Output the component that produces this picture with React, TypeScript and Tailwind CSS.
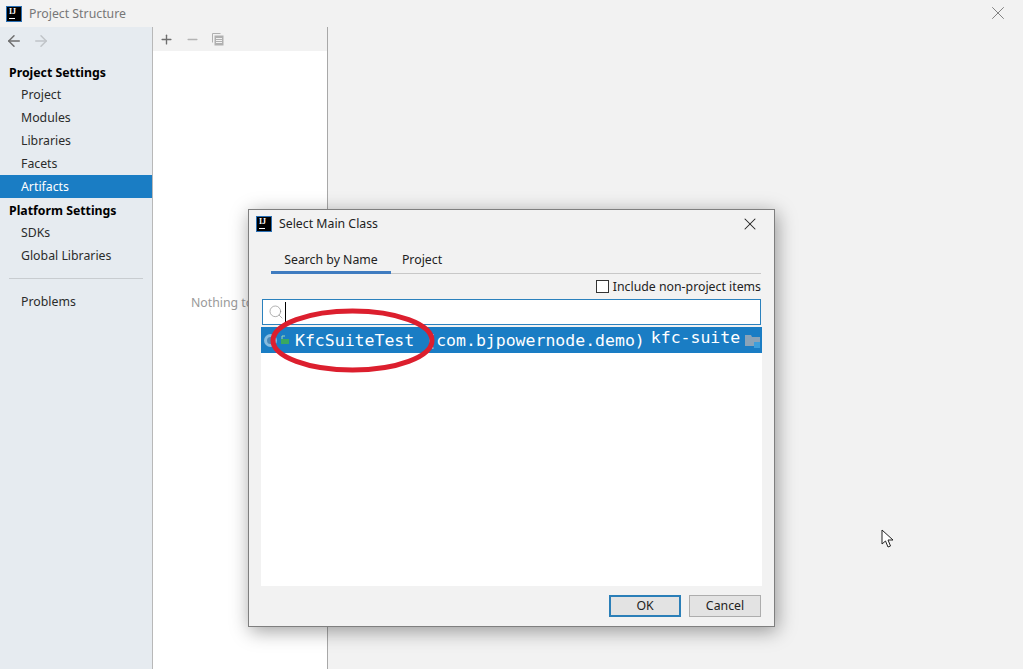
import { ArrowLeft, ArrowRight, Plus, Minus, X, Search } from 'lucide-react';

const IdeaLogo = () => (
  <div className="w-[16px] h-[16px] bg-black border border-[#2a6fb5] flex flex-col items-start pl-[2px] pt-[1px] shrink-0">
    <span className="text-white text-[8px] leading-[8px] font-bold font-['Liberation_Serif',serif]">IJ</span>
    <span className="w-[6px] h-[1px] bg-white mt-[2px]" />
  </div>
);

const NavItem = ({ label, active }: { label: string; active?: boolean }) => (
  <div className={`h-[23px] pl-[21px] pt-[2px] flex items-center text-[12.3px] ${active ? 'bg-[#1a7dc4] text-white' : 'text-[#2b2b2b]'}`}>{label}</div>
);

const NavHead = ({ label }: { label: string }) => (
  <div className="h-[22px] pl-[9px] pt-[2px] flex items-center text-[12.3px] font-bold text-black">{label}</div>
);

const App = () => {
  return (
    <div className="relative w-[1023px] h-[669px] overflow-hidden bg-[#f2f2f2] font-['Noto_Sans',sans-serif]">
      {/* title bar */}
      <div className="h-[27px] flex items-center pl-[6px] pr-[14px]">
        <IdeaLogo />
        <span className="ml-[7px] pt-[2px] text-[12.3px] text-[#777777]">Project Structure</span>
        <X size={22} strokeWidth={1} className="ml-auto mb-[2px] text-[#777777]" />
      </div>

      <div className="flex h-[642px]">
        {/* sidebar */}
        <div className="w-[153px] bg-[#e6ebf0] border-r border-[#b8b8b8] shrink-0">
          <div className="h-[28px] mb-[6px] flex items-center pl-[5px] gap-[9px]">
            <ArrowLeft size={18} strokeWidth={2} className="text-[#6e6e6e]" />
            <ArrowRight size={18} strokeWidth={2} className="text-[#c0c4c8]" />
          </div>
          <NavHead label="Project Settings" />
          <NavItem label="Project" />
          <NavItem label="Modules" />
          <NavItem label="Libraries" />
          <NavItem label="Facets" />
          <NavItem label="Artifacts" active />
          <div className="mt-[1px]">
            <NavHead label="Platform Settings" />
          </div>
          <NavItem label="SDKs" />
          <NavItem label="Global Libraries" />
          <div className="mx-[9px] my-[11px] h-px bg-[#c8ccd0]" />
          <NavItem label="Problems" />
        </div>

        {/* middle list */}
        <div className="w-[175px] border-r border-[#a8a8a8] shrink-0 flex flex-col">
          <div className="h-[24px] flex items-center pl-[6px] gap-[11px]">
            <Plus size={15} strokeWidth={2.2} className="text-[#6e6e6e]" />
            <Minus size={15} strokeWidth={2.2} className="text-[#b4b4b4]" />
            <svg width="14" height="14" viewBox="0 0 14 14" className="text-[#b0b0b0]">
              <path d="M1.5 1.5h8M1.5 1.5v9" stroke="currentColor" strokeWidth="1" fill="none" />
              <rect x="3.5" y="3.5" width="9" height="10" fill="currentColor" />
              <path d="M5 6.5h6M5 8.5h6M5 10.5h6" stroke="#f2f2f2" strokeWidth="1" />
            </svg>
          </div>
          <div className="flex-1 bg-white pt-[243px] pl-[38px] text-[12.3px] text-[#9a9a9a] whitespace-nowrap">Nothing to show</div>
        </div>
      </div>

      {/* dialog */}
      <div className="absolute left-[248px] top-[209px] w-[527px] h-[418px] bg-[#f2f2f2] border border-[#7f7f7f] shadow-[2px_4px_18px_rgba(0,0,0,0.38)] flex flex-col">
        <div className="h-[28px] flex items-center pl-[7px] pr-[14px] shrink-0">
          <IdeaLogo />
          <span className="ml-[7px] text-[12.3px] text-[#222222]">Select Main Class</span>
          <X size={20} strokeWidth={1.25} className="ml-auto text-[#222222]" />
        </div>
        <div className="mt-[9px] h-[27px] border-b border-[#c8c8c8] flex items-end shrink-0 w-[490px] ml-[22px]">
          <div className="w-[120px] h-[27px] pt-[2px] flex items-center justify-center text-[12.3px] text-[#222222] border-b-[3px] border-[#3f7cc0] mb-[-1px]">Search by Name</div>
          <div className="ml-[11px] w-[40px] h-[27px] pt-[2px] flex items-center justify-center text-[12.3px] text-[#222222]">Project</div>
        </div>
        <div className="h-[25px] flex items-center justify-end pr-[13px] shrink-0">
          <span className="w-[13px] h-[13px] border border-[#333333] bg-white mr-[4px]" />
          <span className="pt-[2px] text-[12.3px] text-[#222222]">Include non-project items</span>
        </div>
        <div className="ml-[13px] w-[499px] h-[26px] bg-white border border-[#2b81bd] flex items-center pl-[5px] shrink-0">
          <Search size={16} strokeWidth={1} className="text-[#8a8a8a]" />
          <span className="ml-[1px] w-px h-[20px] bg-black" />
        </div>
        <div className="mt-[2px] ml-[12px] w-[501px] flex-1 bg-white flex flex-col">
          <div className="h-[26px] bg-[#1a7dc4] flex items-center text-white font-['DejaVu_Sans_Mono',monospace] text-[16.5px] pl-[3px] whitespace-nowrap">
            <span className="w-[13px] h-[13px] rounded-full bg-[#4a88b8] border-[3px] border-[#88bcdf] shrink-0" />
            <svg width="9" height="9" viewBox="0 0 9 9" className="ml-[3px] mb-[1px] shrink-0">
              <path d="M2 4V1h3" stroke="#9fd8b4" strokeWidth="1" fill="none" />
              <rect x="1" y="4" width="8" height="5" fill="#3aa860" />
            </svg>
            <span className="ml-[6px] pt-[2px]">KfcSuiteTest</span>
            <span className="ml-[12px] pt-[2px]">(com.bjpowernode.demo)</span>
            <span className="ml-[6px] mb-[4px]">kfc-suite</span>
            <svg width="16" height="14" viewBox="0 0 16 14" className="ml-[5px] mt-[1px] shrink-0">
              <path d="M0 1h6l1 2h8v9H0z" fill="#8aa3b8" />
              <rect x="9" y="8" width="6" height="6" fill="#3d9fdc" />
            </svg>
          </div>
        </div>
        <div className="h-[40px] flex items-center justify-end gap-[8px] pr-[13px] shrink-0">
          <button className="w-[72px] h-[22px] bg-[#e3e3e3] border-2 border-[#2b7fb8] text-[12.3px] text-[#222222] flex items-center justify-center">OK</button>
          <button className="w-[72px] h-[22px] bg-[#e3e3e3] border border-[#adadad] text-[12.3px] text-[#222222] flex items-center justify-center">Cancel</button>
        </div>
      </div>

      {/* red marker ring drawn over the screenshot */}
      <svg width="172" height="72" viewBox="0 0 172 72" className="absolute left-[268px] top-[304px]">
        <ellipse cx="84.5" cy="36.5" rx="79.5" ry="29.5" fill="none" stroke="#dc1f2e" strokeWidth="5" />
      </svg>

      {/* mouse cursor */}
      <svg width="14" height="20" viewBox="0 0 14 20" className="absolute left-[881px] top-[529px]">
        <path d="M1 1v14l3.5-3 2.5 6 2.5-1-2.5-6h5z" fill="#ffffff" stroke="#222222" strokeWidth="1" />
      </svg>
    </div>
  );
};

export default App;
